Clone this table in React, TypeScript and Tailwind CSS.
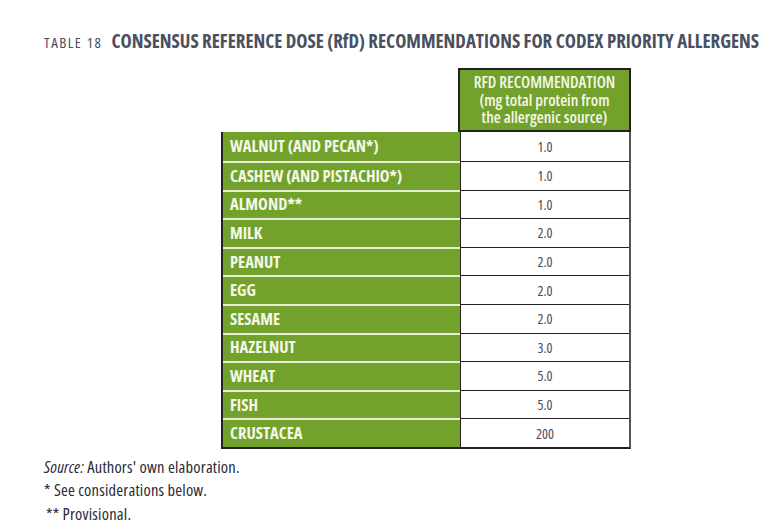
import React from "react";

const rows: [string, string][] = [
  ["WALNUT (AND PECAN*)", "1.0"],
  ["CASHEW (AND PISTACHIO*)", "1.0"],
  ["ALMOND**", "1.0"],
  ["MILK", "2.0"],
  ["PEANUT", "2.0"],
  ["EGG", "2.0"],
  ["SESAME", "2.0"],
  ["HAZELNUT", "3.0"],
  ["WHEAT", "5.0"],
  ["FISH", "5.0"],
  ["CRUSTACEA", "200"],
];

export default function App() {
  return (
    <div className="w-[784px] h-[530px] bg-white overflow-hidden font-['Open_Sans',sans-serif] [font-stretch:75%]">
      <div className="flex items-baseline pl-[44px] pt-[27px] text-[#4a5060] whitespace-nowrap">
        <span className="text-[15px] tracking-[1.5px]">TABLE 18</span>
        <span className="ml-[9px] text-[18.9px] font-bold">
          CONSENSUS REFERENCE DOSE (RfD) RECOMMENDATIONS FOR CODEX PRIORITY ALLERGENS
        </span>
      </div>
      <div className="ml-[221px] mt-[13px] w-[410px]">
        <div className="flex">
          <div className="w-[237px]" />
          <div className="w-[173px] h-[64px] bg-[#73a22c] border-2 border-[#222] flex flex-col items-center justify-center text-[#f4f8e8] text-[16px] leading-[17.5px] font-semibold text-center whitespace-nowrap">
            <span>RFD RECOMMENDATION</span>
            <span>(mg total protein from</span>
            <span>the allergenic source)</span>
          </div>
        </div>
        <div className="border-l-2 border-b-2 border-r-2 border-[#222] border-r-[#555]">
          {rows.map(([name, val], i) => (
            <div key={name} className="flex h-[28.6px]">
              <div
                className={
                  "w-[237px] bg-[#73a22c] flex items-center pl-[7px] text-[#f4f8e8] text-[16.5px] font-bold whitespace-nowrap " +
                  (i > 0 ? "border-t-2 border-[#e6efd4]" : "")
                }
              >
                {name}
              </div>
              <div
                className={
                  "flex-1 border-l border-[#222] flex items-center justify-center text-[#4a4a55] text-[14px] " +
                  (i > 0 ? "border-t border-t-[#222]" : "")
                }
              >
                {val}
              </div>
            </div>
          ))}
        </div>
      </div>
      <div className="pl-[44px] pt-[6px] text-[#2a2a35] text-[16.5px] leading-[23.5px] tracking-[0.2px]">
        <div>
          <span className="italic">Source:</span> Authors' own elaboration.
        </div>
        <div>* See considerations below.</div>
        <div className="pl-[2px]">** Provisional.</div>
      </div>
    </div>
  );
}
